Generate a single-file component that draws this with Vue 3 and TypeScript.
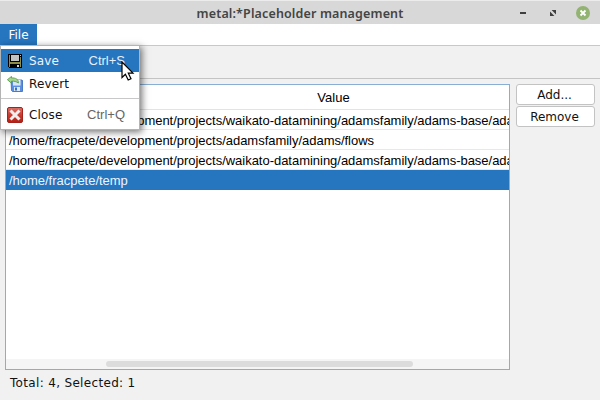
<script setup lang="ts">
interface Row {
  value: string
  selected?: boolean
}

const base = '/home/fracpete/development/projects/'
const rows: Row[] = [
  { value: base + 'waikato-datamining/adamsfamily/adams-base/adams-core' },
  { value: base + 'adamsfamily/adams/flows' },
  { value: base + 'waikato-datamining/adamsfamily/adams-base/adams-core' },
  { value: '/home/fracpete/temp', selected: true },
]
</script>

<template>
  <div class="window">
    <header class="titlebar">
      <span class="title">metal:*Placeholder management</span>
      <div class="controls">
        <svg class="minimize" width="8" height="14" viewBox="0 0 8 14"><rect x="1" y="6" width="6" height="2" fill="#3f3f3f" /></svg>
        <svg width="8" height="14" viewBox="0 0 8 14">
          <path d="M2.600 4H7v4.400ZM1 5.600V10h4.400Z" fill="#3f3f3f" />
        </svg>
        <svg width="14" height="14" viewBox="0 0 14 14">
          <circle cx="7" cy="7" r="7" fill="#92b372" />
          <path d="M4.500 4.500l5 5M9.500 4.500l-5 5" stroke="#fff" stroke-width="1.900" />
        </svg>
      </div>
    </header>

    <nav class="menubar"><span class="menu-title">File</span></nav>
    <div class="toolbar"></div>

    <main class="content">
      <section class="table">
        <div class="head"><span class="head-label">Value</span></div>
        <div v-for="(row, i) in rows" :key="i" class="row" :class="{ selected: row.selected }">{{ row.value }}</div>
        <div class="track"><div class="thumb"></div></div>
      </section>
      <aside class="side">
        <button class="btn">Add...</button>
        <button class="btn">Remove</button>
      </aside>
    </main>
    <footer class="status">Total: 4, Selected: 1</footer>

    <div class="menu">
      <div class="item active">
        <svg class="icon" width="16" height="16" viewBox="0 0 16 16" shape-rendering="crispEdges">
          <path d="M1 1h14v14H2v-1H1Z" fill="#000" />
          <path d="M2 2h1v7h10V4h1v10h-1v-3H3v3H2Z" fill="#918c45" />
          <rect x="4" y="2" width="8" height="6" fill="#c3c3c3" />
          <rect x="13" y="2" width="1" height="1" fill="#c3c3c3" />
          <rect x="3" y="10" width="10" height="1" fill="#918c45" />
          <rect x="10" y="12" width="2" height="2" fill="#d8d8d8" />
        </svg>
        <span class="label">Save</span><span class="key">Ctrl+S</span>
      </div>
      <div class="item">
        <svg class="icon" width="16" height="16" viewBox="0 0 16 16">
          <path d="M4 4h11l.5.5v11H5.500L4.500 14.500Z" fill="#5b8fe0" stroke="#3366bd" stroke-width=".8" />
          <rect x="6" y="4" width="7.500" height="5.500" fill="#edf4ff" />
          <path d="M6 6h7M6 8h7" stroke="#a9c4ee" stroke-width=".6" />
          <rect x="7" y="11" width="6" height="4" fill="#dce9fc" />
          <rect x="8" y="11.500" width="2" height="3" fill="#386fc3" />
          <path d="M.4 3.700 4.500.4v1.500c4-.2 7.100 1.200 6.900 5.100C9.500 5.700 7.500 5 4.500 5.200V7.200Z" fill="#a4d48f" stroke="#4b963d" stroke-width=".8" />
        </svg>
        <span class="label">Revert</span>
      </div>
      <div class="separator"></div>
      <div class="item last">
        <svg class="icon" width="16" height="16" viewBox="0 0 16 16">
          <defs>
            <linearGradient id="close-red" x1="0" y1="0" x2="0" y2="1">
              <stop offset="0" stop-color="#dc7168" />
              <stop offset=".5" stop-color="#c83c30" />
              <stop offset="1" stop-color="#b51f13" />
            </linearGradient>
          </defs>
          <rect x=".5" y=".5" width="15" height="15" rx="1.500" fill="url(#close-red)" stroke="#a5231b" />
          <path d="M3.500 3.500l9 9M12.500 3.500l-9 9" stroke="#f3eeee" stroke-width="3" />
        </svg>
        <span class="label">Close</span><span class="key">Ctrl+Q</span>
      </div>
    </div>

    <svg class="cursor" width="14" height="21" viewBox="0 0 14 21">
      <path d="M1 1v15.500l3.400-3.300 2.800 5.800 2.800-1.300-2.700-5.500h4.700Z" fill="#fff" stroke="#000" stroke-width="1.200" />
    </svg>
  </div>
</template>

<style>
body {
  margin: 0;
}
</style>

<style scoped>
.window {
  position: relative;
  box-sizing: border-box;
  width: 600px;
  height: 400px;
  overflow: hidden;
  background: #f1f1f1;
  color: #111;
  font: 12px/16px "DejaVu Sans", sans-serif;
}
.titlebar {
  display: grid;
  grid-template-columns: 80px 1fr 80px;
  align-items: center;
  box-sizing: border-box;
  height: 24px;
  border-top: 1px solid #ececec;
  background: #d8d8d8;
}
.title {
  grid-column: 2;
  text-align: center;
  color: #444;
  font: 600 12.500px/20px "Noto Sans", sans-serif;
  letter-spacing: 0.14px;
  padding-top: 3px;
  white-space: nowrap;
}
.controls {
  display: flex;
  justify-content: flex-end;
  align-items: center;
  gap: 19px;
  padding-right: 10px;
}
.controls svg {
  flex: none;
}
.controls .minimize {
  margin-right: 3px;
}
.menubar {
  display: flex;
  box-sizing: border-box;
  height: 22px;
  border-bottom: 1px solid #c8c8c8;
  background: #fff;
}
.menu-title {
  width: 37px;
  background: #2675bf;
  color: #fff;
  line-height: 22px;
  text-align: center;
}
.toolbar {
  box-sizing: border-box;
  height: 33px;
  border-bottom: 1px solid #c4c4c4;
}
.content {
  display: flex;
  gap: 6px;
  padding: 5px 5px 0;
}
.table {
  display: flex;
  flex-direction: column;
  box-sizing: border-box;
  width: 505px;
  height: 286px;
  overflow: hidden;
  border: 1px solid #89aed4;
  background: #fff;
  font: 13px/19px "Liberation Sans", sans-serif;
  color: #000;
}
.head {
  flex: none;
  box-sizing: border-box;
  height: 25px;
  padding-left: 152px;
  border-bottom: 1px solid #e3e3e3;
  line-height: 26px;
  text-align: center;
}
.row {
  flex: none;
  box-sizing: border-box;
  height: 20px;
  padding-left: 3px;
  border-bottom: 1px solid #e8e8e8;
  letter-spacing: -0.022px;
  line-height: 22px;
  white-space: nowrap;
}
.row.selected {
  border-color: #2675bf;
  background: #2675bf;
  color: #eef4fb;
}
.track {
  box-sizing: border-box;
  height: 10px;
  margin-top: auto;
  padding: 2px 0 0 100px;
  background: #f5f5f5;
}
.thumb {
  width: 307px;
  height: 6px;
  border-radius: 3px;
  background: #dcdcdc;
}
.side {
  display: flex;
  flex-direction: column;
  gap: 1px;
  width: 79px;
}
.btn {
  box-sizing: border-box;
  width: 79px;
  height: 21px;
  padding: 1px 2px 0 0;
  border: 1px solid #c3c3c3;
  border-radius: 3px;
  background: #fff;
  color: #111;
  font: 12px/19px "DejaVu Sans", sans-serif;
}
.status {
  padding: 5px 10px;
  letter-spacing: 0.33px;
}
.menu {
  position: absolute;
  left: 0;
  top: 45px;
  box-sizing: border-box;
  width: 140px;
  height: 85px;
  padding-top: 3px;
  border: 1px solid #b4b4b4;
  background: #fff;
  box-shadow: 2px 2px 7px rgba(0, 0, 0, 0.55);
}
.item {
  display: flex;
  align-items: center;
  height: 23px;
  padding: 0 14px 0 6px;
}
.item.active {
  background: #2675bf;
  color: #eef4fb;
}
.label {
  letter-spacing: 0.15px;
}
.icon {
  flex: none;
  margin-right: 6px;
}
.key {
  margin-left: auto;
  color: #666;
  font: 13px/23px "Liberation Sans", sans-serif;
}
.active .key {
  color: #e6effa;
}
.separator {
  height: 1px;
  margin: 3px 0 4px;
  background: #c8c8c8;
}
.cursor {
  position: absolute;
  left: 121px;
  top: 61px;
}
</style>
